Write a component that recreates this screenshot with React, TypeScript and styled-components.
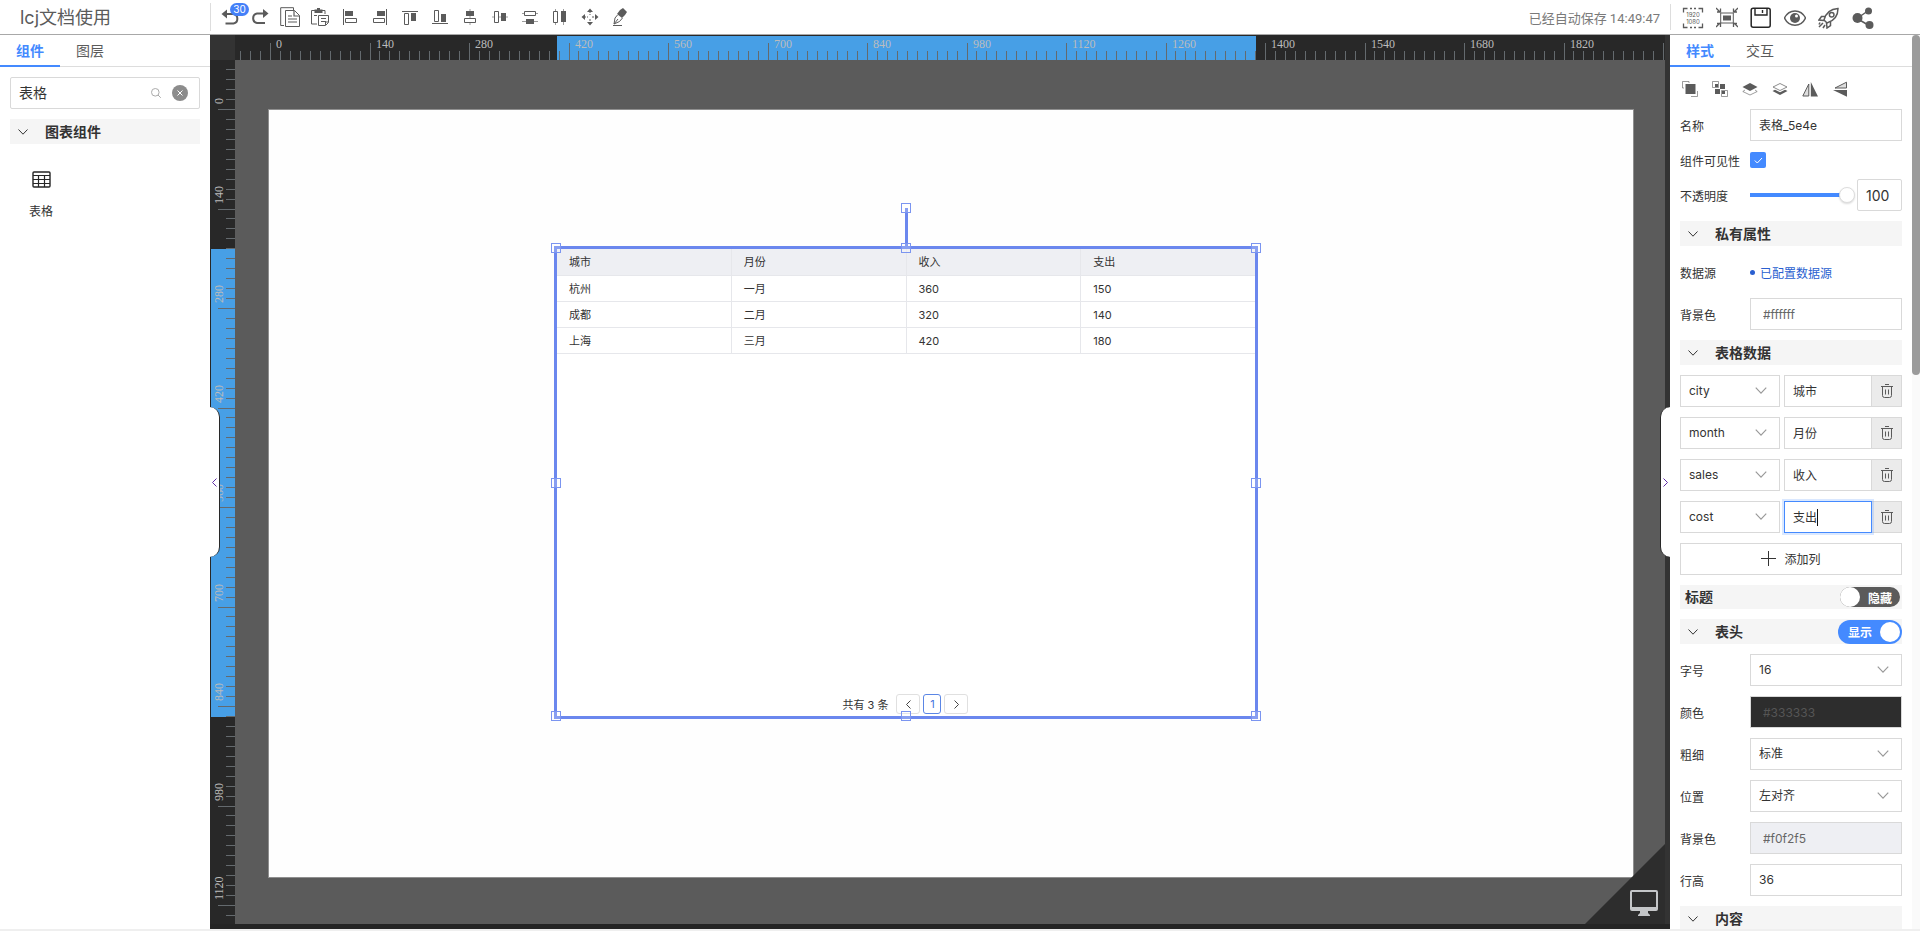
import React, { useLayoutEffect, useRef, useState } from 'react';
import styled, { createGlobalStyle, css } from 'styled-components';

const GlobalStyle = createGlobalStyle`
  *, *::before, *::after { box-sizing: border-box; }
  body { margin: 0; }
  body, button, input, select, table {
    font-family: Inter, "Noto Sans CJK SC", sans-serif;
    font-size: 12px;
    color: #333;
  }
  button { padding: 0; border: 0; background: none; cursor: pointer; }
  svg { display: block; }
`;

const BLUE = '#448aff';
const LINE = '#d9d9d9';

/* ---------- shell ---------- */

const Shell = styled.div`
  display: flex;
  flex-direction: column;
  height: 100vh;
  overflow: hidden;
  background: #fff;
  border-bottom: 2px solid #efefef;
`;

const Header = styled.header`
  display: flex;
  align-items: center;
  flex: none;
  height: 35px;
  border-bottom: 1px solid #a8a8a8;
`;

const Title = styled.h1`
  width: 210px;
  margin: 0;
  padding: 2px 0 0 20px;
  font-size: 18px;
  line-height: 26px;
  font-weight: 400;
  color: #5b5b5b;
`;

const Tools = styled.div`
  display: flex;
  flex: 1;
  padding-left: 4px;
  border-left: 1px solid #ddd;
`;

const IconButton = styled.button<{ $w?: number; $h?: number }>`
  position: relative;
  display: flex;
  align-items: center;
  justify-content: center;
  width: ${(p) => p.$w ?? 30}px;
  height: ${(p) => p.$h ?? 28}px;
  color: #5b5b5b;
`;

const Badge = styled.span`
  position: absolute;
  left: 15px;
  top: 0;
  width: 19px;
  height: 13px;
  border-radius: 7px;
  background: #4480f8;
  color: #fff;
  font-size: 10px;
  line-height: 13px;
  text-align: center;
`;

const SavedAt = styled.span`
  padding-right: 10px;
  font-family: Roboto, "Noto Sans CJK SC", sans-serif;
  font-size: 13px;
  color: #7a7a7a;
`;

const Actions = styled.div`
  display: flex;
  width: 250px;
  padding: 2px 0 0 5px;
  border-left: 1px solid #ddd;
`;

const Main = styled.main`
  display: flex;
  flex: 1;
  min-height: 0;
`;

/* ---------- side panels ---------- */

const LeftPanel = styled.aside`
  flex: none;
  width: 210px;
`;

const RightPanel = styled.aside`
  display: flex;
  flex: none;
  width: 250px;
  overflow: hidden;
`;

const PanelBody = styled.div`
  flex: 1;
  min-width: 0;
`;

const ScrollTrack = styled.div`
  width: 8px;
  background: #fafafa;
`;

const ScrollThumb = styled.div`
  height: 340px;
  border-radius: 4px;
  background: #9b9b9b;
`;

const Tabs = styled.div`
  display: flex;
  height: 32px;
  border-bottom: 1px solid #ddd;
`;

const Tab = styled.button<{ $active?: boolean }>`
  width: 60px;
  height: 32px;
  border-bottom: 2px solid ${(p) => (p.$active ? BLUE : 'transparent')};
  font-size: 14px;
  font-weight: ${(p) => (p.$active ? 600 : 400)};
  color: ${(p) => (p.$active ? BLUE : '#5b5b5b')};
`;

const Stack = styled.div`
  display: flex;
  flex-direction: column;
  gap: 10px;
  padding: 10px;
`;

const SearchBox = styled.label`
  display: flex;
  align-items: center;
  height: 32px;
  padding: 0 11px 0 8px;
  border: 1px solid ${LINE};
  border-radius: 2px;
`;

const SearchInput = styled.input`
  flex: 1;
  min-width: 0;
  padding: 0 0 2px;
  border: 0;
  outline: 0;
  font-size: 14px;
`;

const ClearButton = styled.button`
  display: grid;
  place-items: center;
  width: 16px;
  height: 16px;
  margin-left: 11px;
  border-radius: 50%;
  background: #8c8c8c;
  color: #fff;
`;

const Section = styled.div<{ $plain?: boolean }>`
  display: flex;
  align-items: center;
  height: ${(p) => (p.$plain ? 24 : 25)}px;
  padding-left: ${(p) => (p.$plain ? 5 : 8)}px;
  background: #f5f5f5;
`;

const SectionTitle = styled.h2<{ $plain?: boolean }>`
  flex: 1;
  margin: 0;
  padding-left: ${(p) => (p.$plain ? 0 : 17)}px;
  font-size: 14px;
  line-height: 20px;
  font-weight: 600;
  color: #333;
`;

const Component = styled.button`
  display: flex;
  flex-direction: column;
  align-items: center;
  gap: 15px;
  width: 62px;
  padding-top: 17px;
  line-height: 18px;
`;

const ToolRow = styled.div`
  display: flex;
  height: 22px;
  margin-left: -5px;
`;

const Field = styled.div<{ $h?: number }>`
  display: flex;
  align-items: center;
  height: ${(p) => p.$h ?? 32}px;
`;

const FieldLabel = styled.label`
  flex: none;
  width: 70px;
`;

const box = css`
  height: 32px;
  border: 1px solid ${LINE};
  border-radius: 0;
  background: #fff;
  outline: 0;
`;

const TextInput = styled.input<{ $focus?: boolean }>`
  ${box}
  flex: 1;
  min-width: 0;
  width: 100%;
  padding: 0 8px 2px;
  ${(p) =>
    p.$focus &&
    css`
      border-color: ${BLUE};
      box-shadow: 0 0 0 2px rgba(68, 138, 255, 0.2);
    `}
`;

const ColorInput = styled.input<{ $bg: string; $fg?: string }>`
  ${box}
  flex: 1;
  min-width: 0;
  padding: 0 12px;
  background: ${(p) => p.$bg};
  color: ${(p) => p.$fg ?? '#666'};
`;

const SelectWrap = styled.span<{ $w?: number }>`
  position: relative;
  display: flex;
  flex: ${(p) => (p.$w ? `0 0 ${p.$w}px` : '1')};
`;

const NativeSelect = styled.select`
  ${box}
  width: 100%;
  padding: 0 32px 2px 8px;
  appearance: none;
`;

const SelectArrow = styled.span`
  position: absolute;
  right: 13px;
  top: 12px;
  color: #999;
  pointer-events: none;
`;

const CheckBox = styled.input`
  appearance: none;
  width: 16px;
  height: 16px;
  margin: 0;
  border-radius: 2px;
  background: ${BLUE};
`;

const CheckWrap = styled.span`
  position: relative;
  display: flex;
`;

const CheckMark = styled.svg`
  position: absolute;
  left: 4px;
  top: 5px;
  pointer-events: none;
`;

const Slider = styled.input`
  flex: 1;
  min-width: 0;
  height: 18px;
  margin: 0 2px 0 0;
  appearance: none;
  background: linear-gradient(${BLUE}, ${BLUE}) 0 7px / 92px 4px no-repeat;
  &::-webkit-slider-thumb {
    appearance: none;
    width: 16px;
    height: 16px;
    border: 1px solid #ddd;
    border-radius: 50%;
    background: #fff;
    box-shadow: 0 1px 2px rgba(0, 0, 0, 0.15);
  }
`;

const NumberInput = styled.input`
  ${box}
  width: 45px;
  padding: 0 8px;
  border-radius: 2px;
  font-size: 14px;
`;

const SourceLink = styled.a`
  display: flex;
  align-items: center;
  gap: 5px;
  color: #2a5fd0;
  text-decoration: none;
  &::before {
    content: '';
    width: 5px;
    height: 5px;
    border-radius: 50%;
    background: currentColor;
  }
`;

const ColumnRow = styled.div`
  display: flex;
  height: 32px;
`;

const ColumnName = styled.span`
  position: relative;
  display: flex;
  flex: 1;
  min-width: 0;
  margin-left: 4px;
`;

const Caret = styled.span`
  position: absolute;
  left: 33px;
  top: 8px;
  width: 1px;
  height: 17px;
  background: #111;
`;

const TrashButton = styled.button`
  display: grid;
  place-items: center;
  width: 30px;
  height: 32px;
  border: 1px solid ${LINE};
  border-left: 0;
  background: #ebebeb;
  color: #5b5b5b;
`;

const AddButton = styled.button`
  display: flex;
  align-items: center;
  justify-content: center;
  gap: 8px;
  height: 32px;
  padding-bottom: 1px;
  border: 1px solid ${LINE};
`;

const Switch = styled.label<{ $on?: boolean }>`
  display: flex;
  align-items: center;
  justify-content: space-between;
  width: ${(p) => (p.$on ? 64 : 60)}px;
  height: ${(p) => (p.$on ? 24 : 20)}px;
  margin-right: ${(p) => (p.$on ? 0 : 2)}px;
  padding: ${(p) => (p.$on ? '0 2px 0 10px' : '0 8px 0 0')};
  border-radius: 12px;
  background: ${(p) => (p.$on ? BLUE : '#5b5b5b')};
  color: #fff;
  font-weight: 600;
`;

const SwitchInput = styled.input`
  appearance: none;
  width: 20px;
  height: 20px;
  margin: 0;
  border-radius: 50%;
  background: #fff;
`;

/* ---------- stage ---------- */

const Stage = styled.section`
  position: relative;
  display: grid;
  flex: 1;
  min-width: 0;
  grid-template-columns: 25px 1fr 5px;
  grid-template-rows: 25px 1fr 5px;
  background: #252525;
`;

const Corner = styled.div`
  background: #333;
`;

const Edge = styled.div`
  grid-column: 3;
  grid-row: 1 / 3;
  background: #333;
`;

const RulerSvg = styled.svg`
  width: 100%;
  height: 100%;
  background: #282828;
  font-family: "Liberation Serif", serif;
  font-size: 12px;
  overflow: hidden;
`;

const RulerBox = styled.div`
  min-width: 0;
  min-height: 0;
  overflow: hidden;
`;

const Viewport = styled.div`
  position: relative;
  display: flex;
  min-width: 0;
  min-height: 0;
  grid-column: 2;
  grid-row: 2;
  padding: 49px 31px 46px 33px;
  background: #5b5b5b;
`;

const Artboard = styled.div`
  position: relative;
  flex: 1;
  border: 1px solid #8f8f8f;
  background: #fefefe;
`;

const Widget = styled.div`
  position: absolute;
  left: 288px;
  top: 139px;
  display: flex;
  flex-direction: column;
  justify-content: space-between;
  width: 699px;
  height: 468px;
  background: #fff;
`;

const Frame = styled.div`
  position: absolute;
  inset: -3px -2px -2px -3px;
  border: 3px solid #6b87ee;
`;

const Handle = styled.span<{ $x: string; $y: string }>`
  position: absolute;
  left: ${(p) => p.$x};
  top: ${(p) => p.$y};
  width: 10px;
  height: 10px;
  margin: -5px;
  border: 1px solid #7b95f0;
  background: rgba(255, 255, 255, 0.2);
`;

const Stem = styled.span`
  position: absolute;
  left: 50%;
  top: -41px;
  width: 3px;
  height: 38px;
  margin-left: -1px;
  background: #6b87ee;
`;

const Grid = styled.table`
  width: 100%;
  table-layout: fixed;
  border-collapse: separate;
  border-spacing: 0;
  th, td {
    height: 26px;
    padding: 0 0 0 12px;
    border-right: 1px solid #e6e7eb;
    border-bottom: 1px solid #e6e7eb;
    font-size: 11px;
    line-height: 16px;
    font-weight: 400;
    text-align: left;
  }
  th { height: 27px; background: #eeeff3; }
  th:last-child, td:last-child { border-right: 0; }
`;

const Pager = styled.nav`
  display: flex;
  align-items: center;
  justify-content: center;
  gap: 3px;
  padding-bottom: 3px;
  padding-right: 2px;
  font-size: 11px;
`;

const PagerTotal = styled.span`
  margin-right: 5px;
`;

const PageButton = styled.button<{ $current?: boolean }>`
  display: grid;
  place-items: center;
  width: ${(p) => (p.$current ? 18 : 24)}px;
  height: 20px;
  border: 1px solid ${(p) => (p.$current ? '#5b86e5' : '#e0e0e0')};
  border-radius: 3px;
  font-size: 11px;
  color: ${(p) => (p.$current ? '#4672dd' : '#444')};
`;

const CornerFold = styled.button`
  position: absolute;
  right: 0;
  bottom: 0;
  display: flex;
  align-items: flex-end;
  justify-content: flex-end;
  width: 80px;
  height: 80px;
  padding: 0 7px 8px 0;
  background: #2d2d2d;
  clip-path: polygon(100% 0, 100% 100%, 0 100%);
`;

const Collapse = styled.button<{ $side: 'left' | 'right' }>`
  position: absolute;
  top: 372px;
  ${(p) => p.$side}: 0;
  display: grid;
  place-items: center;
  width: 10px;
  height: 150px;
  background: #fff;
  color: #5e2ca5;
  ${(p) =>
    p.$side === 'left'
      ? css`
          border-radius: 0 10px 10px 0;
          border-right: 1px solid #282828;
        `
      : css`
          border-radius: 10px 0 0 10px;
          border-left: 1px solid #282828;
        `}
`;

/* ---------- icons ---------- */

const Ico = ({ size = 20, box = 20, children }: { size?: number; box?: number; children: React.ReactNode }) => (
  <svg width={size} height={size} viewBox={`0 0 ${box} ${box}`} fill="none" stroke="currentColor" aria-hidden="true">
    {children}
  </svg>
);

const Chevron = ({ w = 10, h = 6 }: { w?: number; h?: number }) => (
  <svg width={w} height={h} viewBox="0 0 10 6" fill="none" stroke="currentColor" aria-hidden="true">
    <path d="M.5.5 5 5.2 9.500.5" />
  </svg>
);

const solid = { fill: 'currentColor', stroke: 'none' };

const TOOLS: { name: string; badge?: string; icon: React.ReactNode }[] = [
  {
    name: '撤销',
    badge: '30',
    icon: (
      <>
        <path d="M5 7h8.500a4.500 4.800 0 0 1 0 9.500H5.500" strokeWidth="2" />
        <path d="M1.500 7 7 2.500v9z" {...solid} />
      </>
    ),
  },
  {
    name: '重做',
    icon: (
      <>
        <path d="M15 6.500H7a4.500 4.800 0 0 0 0 9.500h8" strokeWidth="2" />
        <path d="M18.500 6.500 13 2v9z" {...solid} />
      </>
    ),
  },
  {
    name: '复制',
    icon: (
      <>
        <path d="M4 18.500H.7V.7h12.800V3M5.500 3.500h9l5 5v11h-14z" />
        <path d="M14 3.500v5.500h5.500M8 9h4M8 12h9M8 15h9" strokeWidth="1.200" />
      </>
    ),
  },
  {
    name: '粘贴',
    icon: (
      <>
        <path d="M7 17H1.500V3.500h13.500V7M8.500 8.500h10v7l-3 3h-7z" />
        <path d="M4.500 2.500H7V1h3v1.500h2.500V6h-8z" {...solid} />
        <path d="M11 11.500h5M11 14.500h5M15.500 18v-3h3M4 8.500h3" />
      </>
    ),
  },
  {
    name: '左对齐',
    icon: (
      <>
        <path d="M3.500 2v16M5.500 11.500h11v4h-11z" />
        <path d="M5 4h8v5H5z" {...solid} />
      </>
    ),
  },
  {
    name: '右对齐',
    icon: (
      <>
        <path d="M16.500 2v16M3.500 11.500h11v4h-11z" />
        <path d="M7 4h8v5H7z" {...solid} />
      </>
    ),
  },
  {
    name: '顶对齐',
    icon: (
      <>
        <path d="M2 4.500h16M4.500 6.500h4v11h-4z" />
        <path d="M11 6h5v8h-5z" {...solid} />
      </>
    ),
  },
  {
    name: '底对齐',
    icon: (
      <>
        <path d="M2 16.500h16M4.500 3.500h4v11h-4z" />
        <path d="M11 7h5v8h-5z" {...solid} />
      </>
    ),
  },
  {
    name: '水平居中',
    icon: (
      <>
        <path d="M10 2v16" strokeOpacity=".6" />
        <path d="M4.500 11.500h11v4h-11z" fill="#fff" />
        <path d="M6 4h8v5H6z" {...solid} />
      </>
    ),
  },
  {
    name: '垂直居中',
    icon: (
      <>
        <path d="M2 10h16" strokeOpacity=".6" />
        <path d="M4.500 4.500h4v11h-4z" fill="#fff" />
        <path d="M11 6h5v8h-5z" {...solid} />
      </>
    ),
  },
  {
    name: '垂直分布',
    icon: (
      <>
        <path d="M2 6.500h16M2 14.500h16" strokeOpacity=".6" />
        <path d="M4.500 4.500h11v4h-11z" fill="#fff" />
        <path d="M6 12h8v5H6z" {...solid} />
      </>
    ),
  },
  {
    name: '水平分布',
    icon: (
      <>
        <path d="M5.500 2v16M13.500 2v16" strokeOpacity=".6" />
        <path d="M3.500 4.500h4v11h-4z" fill="#fff" />
        <path d="M11 4h5v11h-5z" {...solid} />
      </>
    ),
  },
  {
    name: '移动',
    icon: (
      <>
        <path d="M10 1.500 13 5H7zM10 18.500 13 15H7zM1.500 10 5 7v6zM18.500 10 15 7v6z" {...solid} />
        <path d="M10 4v4M10 12v4M4 10h4M12 10h4" strokeDasharray="2 1" />
      </>
    ),
  },
  {
    name: '画笔',
    icon: (
      <>
        <path d="m10 3 3-2 4 4-2 3-3 3-5-4z" {...solid} />
        <path d="M7.500 8 5 11l-1 6 5.500-2.500 3-3.500M4 17l4-5M3 18.500h9" />
      </>
    ),
  },
];

const ACTIONS: { name: string; icon: React.ReactNode }[] = [
  {
    name: '实际尺寸',
    icon: (
      <>
        <path d="M1.500 5.500v-4h4M16.500 1.500h4v4M1.500 16.500v4h4M20.500 16.500v4h-4M8 1.500h2M12 1.500h2M8 20.500h2M12 20.500h2" strokeWidth="1.300" />
        <g {...solid} fontSize="6" textAnchor="middle">
          <text x="11" y="10">1920</text>
          <text x="11" y="17">1080</text>
        </g>
      </>
    ),
  },
  {
    name: '适应画布',
    icon: (
      <>
        <path d="M4.700 6h12.600v10H4.700z" />
        <path d="M7 8.500h8v5H7z" {...solid} />
        <path d="m0 1 4 4M22 1l-4 4M0 20l4-4M22 20l-4-4M1 5h3.500V1.500M21 5h-3.500V1.500M1 16.500h3.500V20M21 16.500h-3.500V20" strokeWidth="1.300" />
      </>
    ),
  },
  {
    name: '保存',
    icon: (
      <g stroke="#262626">
        <rect x="1.200" y="1.200" width="19" height="19" rx="2" strokeWidth="1.500" />
        <path d="M5 1.500V8h12V1.500M12.500 3v3" strokeWidth="1.400" />
      </g>
    ),
  },
  {
    name: '预览',
    icon: (
      <>
        <path d="M.5 11C5 1.500 17 1.500 21.500 11 17 20.500 5 20.500.5 11z" strokeWidth="1.500" />
        <circle cx="11" cy="11" r="5" {...solid} />
        <circle cx="12.500" cy="9" r="1.500" fill="#fff" stroke="none" />
      </>
    ),
  },
  {
    name: '发布',
    icon: (
      <>
        <path d="M6 13c1.500-6 6-11 14-11.500C20 9 15.500 14 9 16z" strokeWidth="1.500" />
        <circle cx="13.700" cy="7.800" r="2.300" strokeWidth="1.500" />
        <path d="M7.500 9.500H3.500L1 13l5 .5M12.500 14.500v4L9 21l-.5-5M5 16l-4 4M2 15.500l-1 2M7 18l-2 3" strokeWidth="1.500" />
      </>
    ),
  },
  {
    name: '分享',
    icon: (
      <>
        <path d="m5 11.500 11.500-8M5 11.500l12 7" strokeWidth="1.500" />
        <circle cx="5.500" cy="11" r="5" {...solid} />
        <circle cx="16.500" cy="4" r="3.500" {...solid} />
        <circle cx="17.500" cy="18" r="4" {...solid} />
      </>
    ),
  },
];

const LAYER_TOOLS: { name: string; icon: React.ReactNode }[] = [
  {
    name: '成组',
    icon: (
      <>
        <path d="M3.500 3h10v10h-10z" {...solid} />
        <path d="M2 7H.5V.5H7V2M15.500 10v5.500H9" strokeOpacity=".6" />
      </>
    ),
  },
  {
    name: '取消成组',
    icon: (
      <>
        <path d="M8 3h5v5H8zM3 8h5v5H3z" {...solid} />
        <path d="M.5.500h6v6h-6zM9.500 9.500h6v6h-6z" strokeOpacity=".6" />
        <path d="M3 3h3v3H3zM10 10h3v3h-3z" {...solid} />
      </>
    ),
  },
  {
    name: '上移一层',
    icon: (
      <>
        <path d="m8 2 7.500 4L8 10 .5 6z" {...solid} />
        <path d="M3 9 .8 10.500 8 14l7.200-3.500L13 9" strokeOpacity=".6" />
      </>
    ),
  },
  {
    name: '下移一层',
    icon: (
      <>
        <path d="M8 2.500 15 6 8 9.500 1 6z" strokeOpacity=".7" />
        <path d="M.5 10 3 8.800 8 11.200l5-2.400 2.500 1.200L8 14z" {...solid} />
      </>
    ),
  },
  {
    name: '水平翻转',
    icon: (
      <>
        <path d="M8.800 1v14.500H16z" {...solid} />
        <path d="M6.800 3v12H.8z" fill="#ddd" />
      </>
    ),
  },
  {
    name: '垂直翻转',
    icon: (
      <>
        <path d="M15 15.800 1 9h14z" {...solid} />
        <path d="M14.500 1.200V7H3z" fill="#ddd" />
      </>
    ),
  },
];

/* ---------- pieces ---------- */

const UNITS_PER_MARK = 140;
const tickAt = (origin: number, i: number) => origin + Math.round((i * 199) / 20);

const ticksFor = (origin: number, length: number) => {
  const ticks: { i: number; at: number }[] = [];
  for (let i = -Math.floor(origin / 10); tickAt(origin, i) < length; i += 1) {
    ticks.push({ i, at: tickAt(origin, i) });
  }
  return ticks;
};

/* Length of the ruler along its axis, kept up to date as the window changes. */
function useLength(axis: 'width' | 'height') {
  const ref = useRef<HTMLDivElement>(null);
  const [length, setLength] = useState(0);
  useLayoutEffect(() => {
    const node = ref.current;
    if (!node) return undefined;
    const measure = () => setLength(node.getBoundingClientRect()[axis]);
    measure();
    window.addEventListener('resize', measure);
    return () => window.removeEventListener('resize', measure);
  }, [axis]);
  return { ref, length };
}

const HorizontalRuler = () => {
  const { ref, length } = useLength('width');
  return (
    <RulerBox ref={ref}>
      <RulerSvg>
        <rect x="322" y="1" width="699" height="24" fill="#479fe6" />
        {ticksFor(35, length).map(({ i, at }) => {
          const major = i % 10 === 0;
          return (
            <React.Fragment key={i}>
              <rect x={at} y={major ? 8 : 16} width="1" height="17" fill="#646a6e" />
              {major && at + 30 < length && (
                <text x={at + 6} y="13" fill="#bcbcbc">
                  {(i / 10) * UNITS_PER_MARK}
                </text>
              )}
            </React.Fragment>
          );
        })}
      </RulerSvg>
    </RulerBox>
  );
};

const VerticalRuler = () => {
  const { ref, length } = useLength('height');
  return (
    <RulerBox ref={ref}>
      <RulerSvg>
        <rect x="1" y="189" width="24" height="468" fill="#479fe6" />
        {ticksFor(49, length).map(({ i, at }) => {
          const major = i % 10 === 0;
          return (
            <React.Fragment key={i}>
              <rect x={major ? 8 : 16} y={at} width="17" height="1" fill="#646a6e" />
              {major && (
                <text transform={`translate(13 ${at - 5}) rotate(-90)`} fill="#bcbcbc">
                  {(i / 10) * UNITS_PER_MARK}
                </text>
              )}
            </React.Fragment>
          );
        })}
      </RulerSvg>
    </RulerBox>
  );
};

const Select = ({ id, label, value, w }: { id: string; label?: string; value: string; w?: number }) => (
  <SelectWrap $w={w}>
    <NativeSelect id={id} aria-label={label} defaultValue={value}>
      <option>{value}</option>
    </NativeSelect>
    <SelectArrow>
      <Chevron w={12} h={7} />
    </SelectArrow>
  </SelectWrap>
);

const Heading = ({ children, aside }: { children: string; aside?: React.ReactNode }) => (
  <Section>
    <Chevron />
    <SectionTitle>{children}</SectionTitle>
    {aside}
  </Section>
);

const TrashIcon = () => (
  <svg width="12" height="14" viewBox="0 0 12 14" fill="none" stroke="currentColor" aria-hidden="true">
    <path d="M0 2.500h12M4 .5h4M1.500 2.500v9a2 2 0 0 0 2 2h5a2 2 0 0 0 2-2v-9M4.500 5.500v5M7.500 5.500v5" />
  </svg>
);

const HEAD = ['城市', '月份', '收入', '支出'];
const ROWS = [
  ['杭州', '一月', '360', '150'],
  ['成都', '二月', '320', '140'],
  ['上海', '三月', '420', '180'],
];
const COLUMNS = [
  ['city', '城市'],
  ['month', '月份'],
  ['sales', '收入'],
  ['cost', '支出'],
];
const FAR = 'calc(100% + 1px)';
const HANDLES = [
  ['-1px', '-1px'], ['50%', '-1px'], [FAR, '-1px'],
  ['-1px', '50%'], [FAR, '50%'],
  ['-1px', '100%'], ['50%', '100%'], [FAR, '100%'],
  ['50%', '-41px'],
];

const SideArrow = ({ flip }: { flip?: boolean }) => (
  <svg width="5" height="9" viewBox="0 0 5 9" fill="none" stroke="currentColor" aria-hidden="true">
    <path d={flip ? 'M.5.5 4.500 4.500.500 8.500' : 'M4.500.500.500 4.500 4.500 8.500'} />
  </svg>
);

export default function App() {
  return (
    <Shell>
      <GlobalStyle />
      <Header>
        <Title>lcj文档使用</Title>
        <Tools>
          {TOOLS.map((t) => (
            <IconButton key={t.name} aria-label={t.name}>
              <Ico>{t.icon}</Ico>
              {t.badge && <Badge>{t.badge}</Badge>}
            </IconButton>
          ))}
        </Tools>
        <SavedAt>已经自动保存 14:49:47</SavedAt>
        <Actions>
          {ACTIONS.map((a) => (
            <IconButton key={a.name} aria-label={a.name} $w={34} $h={24}>
              <Ico size={22} box={22}>{a.icon}</Ico>
            </IconButton>
          ))}
        </Actions>
      </Header>

      <Main>
        <LeftPanel>
          <Tabs>
            <Tab $active>组件</Tab>
            <Tab>图层</Tab>
          </Tabs>
          <Stack>
            <SearchBox>
              <SearchInput aria-label="搜索组件" defaultValue="表格" />
              <svg width="10" height="10" viewBox="0 0 10 10" fill="none" stroke="#aaa" aria-hidden="true">
                <circle cx="4.300" cy="4.300" r="3.800" />
                <path d="m7 7 2.800 2.800" />
              </svg>
              <ClearButton aria-label="清除">
                <svg width="6" height="6" viewBox="0 0 6 6" stroke="currentColor" aria-hidden="true">
                  <path d="m.5.5 5 5m0-5-5 5" />
                </svg>
              </ClearButton>
            </SearchBox>
            <Heading>图表组件</Heading>
            <Component>
              <svg width="19" height="17" viewBox="0 0 19 17" fill="none" stroke="#262626" aria-hidden="true">
                <rect x="1" y="1" width="17" height="15" rx="1" strokeWidth="1.400" />
                <path d="M1 4.500h17M1 8.500h17M1 12.500h17M6.500 4.500V16M12.500 4.500V16" strokeWidth="1.200" />
              </svg>
              表格
            </Component>
          </Stack>
        </LeftPanel>

        <Stage>
          <Corner />
          <HorizontalRuler />
          <Edge />
          <VerticalRuler />
          <Viewport>
            <Artboard>
              <Widget>
                <Grid>
                  <thead>
                    <tr>
                      {HEAD.map((h) => (
                        <th key={h} scope="col">{h}</th>
                      ))}
                    </tr>
                  </thead>
                  <tbody>
                    {ROWS.map((r) => (
                      <tr key={r[0]}>
                        {r.map((c) => (
                          <td key={c}>{c}</td>
                        ))}
                      </tr>
                    ))}
                  </tbody>
                </Grid>
                <Pager aria-label="分页">
                  <PagerTotal>共有 3 条</PagerTotal>
                  <PageButton aria-label="上一页">
                    <SideArrow />
                  </PageButton>
                  <PageButton $current>1</PageButton>
                  <PageButton aria-label="下一页">
                    <SideArrow flip />
                  </PageButton>
                </Pager>
                <Frame>
                  <Stem />
                  {HANDLES.map(([x, y]) => (
                    <Handle key={x + y} $x={x} $y={y} />
                  ))}
                </Frame>
              </Widget>
            </Artboard>
            <CornerFold aria-label="切换设备">
              <svg width="28" height="26" viewBox="0 0 28 26" aria-hidden="true">
                <path d="M2 0h24a2 2 0 0 1 2 2v17a2 2 0 0 1-2 2h-8v2l2 2v1H8v-1l2-2v-2H2a2 2 0 0 1-2-2V2a2 2 0 0 1 2-2zm0 2v15h24V2z" fill="#c4c6c8" fillRule="evenodd" />
              </svg>
            </CornerFold>
          </Viewport>
          <Collapse $side="left" aria-label="收起左侧面板">
            <SideArrow />
          </Collapse>
          <Collapse $side="right" aria-label="收起右侧面板">
            <SideArrow flip />
          </Collapse>
        </Stage>

        <RightPanel>
          <PanelBody>
            <Tabs>
              <Tab $active>样式</Tab>
              <Tab>交互</Tab>
            </Tabs>
            <Stack>
              <ToolRow>
                {LAYER_TOOLS.map((t) => (
                  <IconButton key={t.name} aria-label={t.name} $h={24}>
                    <Ico size={16} box={16}>{t.icon}</Ico>
                  </IconButton>
                ))}
              </ToolRow>
              <Field>
                <FieldLabel htmlFor="name">名称</FieldLabel>
                <TextInput id="name" defaultValue="表格_5e4e" />
              </Field>
              <Field $h={18}>
                <FieldLabel htmlFor="visible">组件可见性</FieldLabel>
                <CheckWrap>
                  <CheckBox id="visible" type="checkbox" defaultChecked />
                  <CheckMark width="9" height="7" viewBox="0 0 9 7" fill="none" stroke="#fff">
                    <path d="m.8 3.500 2.500 2.500L8 1" />
                  </CheckMark>
                </CheckWrap>
              </Field>
              <Field>
                <FieldLabel htmlFor="opacity">不透明度</FieldLabel>
                <Slider id="opacity" type="range" defaultValue="100" />
                <NumberInput aria-label="不透明度数值" defaultValue="100" />
              </Field>
              <Heading>私有属性</Heading>
              <Field>
                <FieldLabel as="span">数据源</FieldLabel>
                <SourceLink href="#source">已配置数据源</SourceLink>
              </Field>
              <Field>
                <FieldLabel htmlFor="bg">背景色</FieldLabel>
                <ColorInput id="bg" $bg="#fff" defaultValue="#ffffff" />
              </Field>
              <Heading>表格数据</Heading>
              {COLUMNS.map(([key, name]) => (
                <ColumnRow key={key}>
                  <Select id={`field-${key}`} label={`${name}字段`} value={key} w={100} />
                  <ColumnName>
                    <TextInput aria-label={`${name}列名`} defaultValue={name} $focus={key === 'cost'} />
                    {key === 'cost' && <Caret />}
                  </ColumnName>
                  <TrashButton aria-label={`删除${name}`}>
                    <TrashIcon />
                  </TrashButton>
                </ColumnRow>
              ))}
              <AddButton>
                <svg width="15" height="15" viewBox="0 0 15 15" stroke="currentColor" aria-hidden="true">
                  <path d="M7.500 0v15M0 7.500h15" />
                </svg>
                添加列
              </AddButton>
              <Section $plain>
                <SectionTitle $plain>标题</SectionTitle>
                <Switch>
                  <SwitchInput type="checkbox" role="switch" />
                  隐藏
                </Switch>
              </Section>
              <Heading
                aside={
                  <Switch $on>
                    显示
                    <SwitchInput type="checkbox" role="switch" defaultChecked />
                  </Switch>
                }
              >
                表头
              </Heading>
              <Field>
                <FieldLabel htmlFor="size">字号</FieldLabel>
                <Select id="size" value="16" />
              </Field>
              <Field>
                <FieldLabel htmlFor="color">颜色</FieldLabel>
                <ColorInput id="color" $bg="#2d2d2d" $fg="#555" defaultValue="#333333" />
              </Field>
              <Field>
                <FieldLabel htmlFor="weight">粗细</FieldLabel>
                <Select id="weight" value="标准" />
              </Field>
              <Field>
                <FieldLabel htmlFor="align">位置</FieldLabel>
                <Select id="align" value="左对齐" />
              </Field>
              <Field>
                <FieldLabel htmlFor="headbg">背景色</FieldLabel>
                <ColorInput id="headbg" $bg="#eeeff3" defaultValue="#f0f2f5" />
              </Field>
              <Field>
                <FieldLabel htmlFor="rowheight">行高</FieldLabel>
                <TextInput id="rowheight" defaultValue="36" />
              </Field>
              <Heading>内容</Heading>
            </Stack>
          </PanelBody>
          <ScrollTrack>
            <ScrollThumb />
          </ScrollTrack>
        </RightPanel>
      </Main>
    </Shell>
  );
}
